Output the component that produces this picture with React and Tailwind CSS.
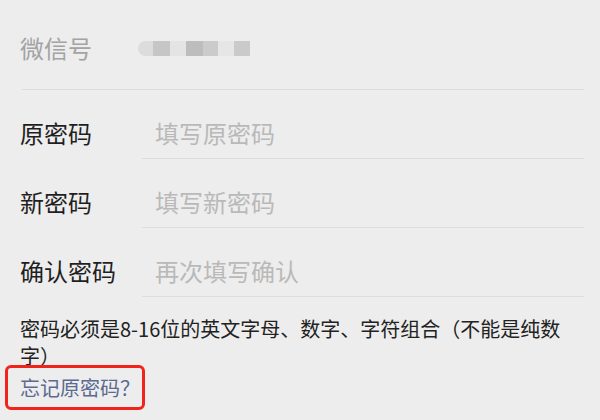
import React from 'react'

const PasswordRow = ({ label, placeholder }) => {
  return (
    <div className="flex items-stretch">
      <div className="w-[122px] pt-[27px] pb-[10px] text-[24px] leading-[32px] text-[#1f1f1f]">
        {label}
      </div>
      <div className="flex-1 pl-[13px] pt-[27px] pb-[9px] text-[24px] leading-[32px] text-[#b9b9b9] border-b border-[#dcdcdc]">
        {placeholder}
      </div>
    </div>
  )
}

const App = () => {
  return (
    <div
      className="w-[600px] h-[420px] overflow-hidden bg-[#ededed] pl-[20px] pr-[16px]"
      style={{ fontFamily: '"Noto Sans CJK SC", "Noto Sans", sans-serif' }}
    >
      <div className="flex items-center pt-[32px] pb-[25px] border-b border-[#dcdcdc] ml-[2px]">
        <div className="w-[118px] -ml-[2px] text-[24px] leading-[32px] text-[#a3a3a3]">微信号</div>
        <div className="flex items-center h-[16px]">
          <div className="w-[15px] h-[15px] bg-[#dcdcdc] rounded-l-full" />
          <div className="w-[17px] h-[15px] bg-[#c6c6c6]" />
          <div className="w-[16px] h-[15px] bg-[#e4e4e4]" />
          <div className="w-[17px] h-[15px] bg-[#bdbdbd]" />
          <div className="w-[15px] h-[15px] bg-[#cbcbcb]" />
          <div className="w-[16px] h-[15px] bg-[#e6e6e6]" />
          <div className="w-[16px] h-[15px] bg-[#cacaca]" />
        </div>
      </div>

      <PasswordRow label="原密码" placeholder="填写原密码" />
      <PasswordRow label="新密码" placeholder="填写新密码" />
      <PasswordRow label="确认密码" placeholder="再次填写确认" />

      <p className="mt-[18px] text-[20px] leading-[27px] text-[#222222]">
        <span className="whitespace-nowrap">密码必须是8-16位的英文字母、数字、字符组合（不能是纯数</span>
        <br />
        字）
      </p>

      <div className="relative -mt-[4px] -ml-[15px] w-[140px] h-[45px] border-[3px] border-[#f2231b] rounded-[6px] bg-[#ededed] flex items-center pl-[12px]">
        <span className="text-[20px] leading-[27px] text-[#5a6a90]">忘记原密码？</span>
      </div>
    </div>
  )
}

export default App
